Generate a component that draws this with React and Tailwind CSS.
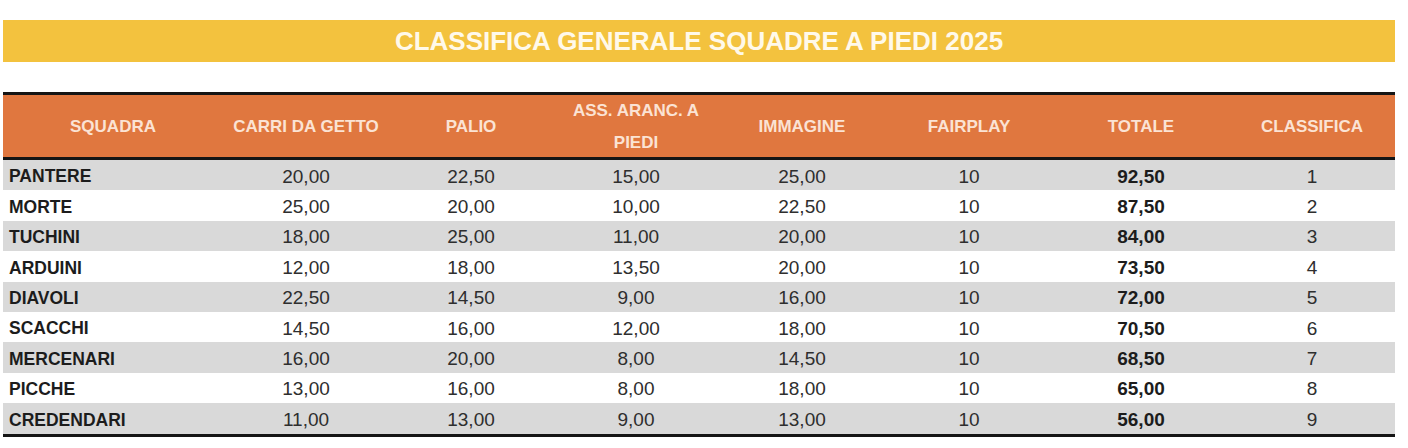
import React from "react";

const rows = [
  ["PANTERE", "20,00", "22,50", "15,00", "25,00", "10", "92,50", "1"],
  ["MORTE", "25,00", "20,00", "10,00", "22,50", "10", "87,50", "2"],
  ["TUCHINI", "18,00", "25,00", "11,00", "20,00", "10", "84,00", "3"],
  ["ARDUINI", "12,00", "18,00", "13,50", "20,00", "10", "73,50", "4"],
  ["DIAVOLI", "22,50", "14,50", "9,00", "16,00", "10", "72,00", "5"],
  ["SCACCHI", "14,50", "16,00", "12,00", "18,00", "10", "70,50", "6"],
  ["MERCENARI", "16,00", "20,00", "8,00", "14,50", "10", "68,50", "7"],
  ["PICCHE", "13,00", "16,00", "8,00", "18,00", "10", "65,00", "8"],
  ["CREDENDARI", "11,00", "13,00", "9,00", "13,00", "10", "56,00", "9"],
];

const headers = [
  ["SQUADRA"],
  ["CARRI DA GETTO"],
  ["PALIO"],
  ["ASS. ARANC. A", "PIEDI"],
  ["IMMAGINE"],
  ["FAIRPLAY"],
  ["TOTALE"],
  ["CLASSIFICA"],
];

const cols = "grid grid-cols-[220px_166px_164px_166px_166px_168px_176px_166px]";

export default function App() {
  return (
    <div
      className="w-[1408px] h-[448px] bg-white pt-[20px] pl-[3px]"
      style={{ fontFamily: '"Liberation Sans", Arial, sans-serif' }}
    >
      <div className="w-[1392px] h-[42px] bg-[#f3c23e] flex items-center justify-center">
        <span className="text-[26px] font-bold text-[#fff9ea] leading-none">
          CLASSIFICA GENERALE SQUADRE A PIEDI 2025
        </span>
      </div>
      <div className="w-[1392px] mt-[30px] border-t-[3px] border-b-[3px] border-[#151515]">
        <div className={`${cols} h-[65px] bg-[#e0773f] border-b-[3px] border-[#151515]`}>
          {headers.map((h, i) => (
            <div
              key={i}
              className="flex flex-col items-center justify-center text-[17px] font-bold text-[#fbe3d4] leading-[32px] whitespace-nowrap"
            >
              {h.map((l, j) => (
                <span key={j}>{l}</span>
              ))}
            </div>
          ))}
        </div>
        {rows.map((r, i) => (
          <div
            key={i}
            className={`${cols} h-[30.4px] items-center leading-none pt-[2px] ${
              i % 2 === 0 ? "bg-[#d9d9d9]" : "bg-white"
            }`}
          >
            {r.map((c, j) => (
              <div
                key={j}
                className={
                  j === 0
                    ? "pl-[6px] pt-[2px] text-[17.5px] font-bold text-[#1c1c1c]"
                    : j === 6
                    ? "text-center text-[19px] font-bold text-[#1c1c1c]"
                    : "text-center text-[19px] text-[#2e2e2e]"
                }
              >
                {c}
              </div>
            ))}
          </div>
        ))}
      </div>
    </div>
  );
}
